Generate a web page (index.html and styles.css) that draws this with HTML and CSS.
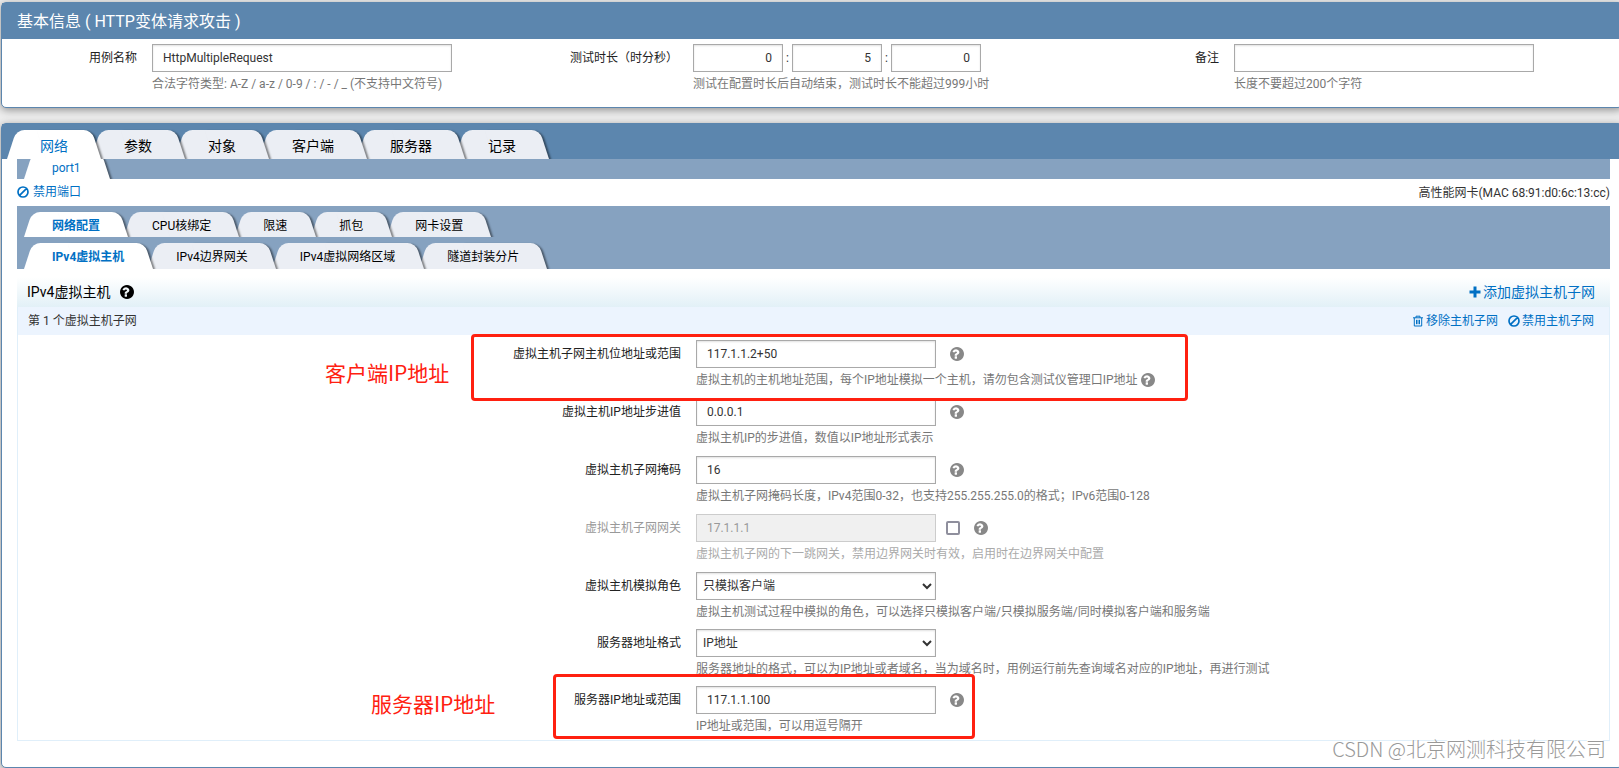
FILE: index.html
```html
<!DOCTYPE html>
<html lang="zh-CN">
<head>
<meta charset="utf-8">
<title>基本信息</title>
<link rel="stylesheet" href="styles.css">
</head>
<body>
<svg class="defs" aria-hidden="true">
  <symbol id="i-help" viewBox="128 128 1536 1536"><path d="M896 1376v-192q0-14-9-23t-23-9h-192q-14 0-23 9t-9 23v192q0 14 9 23t23 9h192q14 0 23-9t9-23zM1152 704q0-88-55.500-163t-138.500-116t-170-41q-243 0-371 213q-15 24 8 42l132 100q7 6 19 6q16 0 25-12q53-68 86-92q34-24 86-24q48 0 85.500 26t37.500 59q0 38-20 61t-68 45q-63 28-115.500 86.500t-52.500 125.500v36q0 14 9 23t23 9h192q14 0 23-9t9-23q0-19 21.500-49.500t54.500-49.500q32-18 49-28.500t46-35t44.500-48t28-60.500t12.500-81zM1664 896q0 209-103 385.500t-279.500 279.500t-385.500 103t-385.500-103t-279.500-279.500t-103-385.500t103-385.500t279.500-279.500t385.500-103t385.500 103t279.500 279.500t103 385.500z"/></symbol>
  <symbol id="i-ban" viewBox="0 0 12 12"><path d="M6 1a5 5 0 1 0 0 10a5 5 0 1 0 0-10zM2.600 9.400l6.800-6.800" fill="none" stroke="currentColor" stroke-width="1.700"/></symbol>
  <symbol id="i-plus" viewBox="0 0 12 12"><path d="M4.500 .5h3v4h4v3h-4v4h-3v-4h-4v-3h4z"/></symbol>
  <symbol id="i-trash" viewBox="0 0 12 12"><path d="M1 2.800h10M4 2.800V1.200h4v1.600M2.300 2.800v8.200h7.400V2.800M4.500 4.800v4.400M6 4.800v4.400M7.500 4.800v4.400" fill="none" stroke="currentColor"/></symbol>
</svg>
<main class="page">
  <section class="panel">
    <h1 class="panel-title">基本信息 ( HTTP变体请求攻击 )</h1>
    <div class="basics">
      <div class="basic">
        <label for="name">用例名称</label>
        <div><input class="box" id="name" value="HttpMultipleRequest"><p class="hint">合法字符类型: A-Z / a-z / 0-9 / : / - / _ (不支持中文符号)</p></div>
      </div>
      <div class="basic">
        <label for="hours">测试时长（时分秒）</label>
        <div>
          <div class="duration"><input class="box" id="hours" value="0"><span>:</span><input class="box" aria-label="分" value="5"><span>:</span><input class="box" aria-label="秒" value="0"></div>
          <p class="hint">测试在配置时长后自动结束，测试时长不能超过999小时</p>
        </div>
      </div>
      <div class="basic">
        <label for="remark">备注</label>
        <div><input class="box" id="remark"><p class="hint">长度不要超过200个字符</p></div>
      </div>
    </div>
  </section>

  <section class="panel main">
    <nav class="tabs tabs-top">
      <button class="tab active">网络</button><button class="tab">参数</button><button class="tab">对象</button><button class="tab">客户端</button><button class="tab">服务器</button><button class="tab">记录</button>
    </nav>
    <div class="content">
      <nav class="tabs tabs-port"><button class="tab active">port1</button></nav>
      <div class="port-row">
        <a class="action" href="#"><svg class="icon-sm"><use href="#i-ban"/></svg><span>禁用端口</span></a>
        <span>高性能网卡(MAC 68:91:d0:6c:13:cc)</span>
      </div>
      <nav class="tabs tabs-config">
        <button class="tab active">网络配置</button><button class="tab">CPU核绑定</button><button class="tab">限速</button><button class="tab">抓包</button><button class="tab">网卡设置</button>
      </nav>
      <nav class="tabs tabs-config tabs-sub">
        <button class="tab active">IPv4虚拟主机</button><button class="tab">IPv4边界网关</button><button class="tab">IPv4虚拟网络区域</button><button class="tab">隧道封装分片</button>
      </nav>
      <header class="group-head">
        <h2>IPv4虚拟主机 <svg class="icon"><use href="#i-help"/></svg></h2>
        <a class="action add" href="#"><svg class="icon-sm"><use href="#i-plus"/></svg><span>添加虚拟主机子网</span></a>
      </header>
      <div class="subnet">
        <div class="subnet-head">
          <span>第 1 个虚拟主机子网</span>
          <span class="actions"><a class="action" href="#"><svg class="icon-sm"><use href="#i-trash"/></svg><span>移除主机子网</span></a><a class="action" href="#"><svg class="icon-sm"><use href="#i-ban"/></svg><span>禁用主机子网</span></a></span>
        </div>
        <form class="form">
          <div class="row">
            <label for="range">虚拟主机子网主机位地址或范围</label>
            <div class="field">
              <div class="control"><input class="box" id="range" value="117.1.1.2+50"><svg class="icon"><use href="#i-help"/></svg></div>
              <p class="hint">虚拟主机的主机地址范围，每个IP地址模拟一个主机，请勿包含测试仪管理口IP地址 <svg class="icon"><use href="#i-help"/></svg></p>
              <div class="mark mark-client"></div><strong class="note note-client">客户端IP地址</strong>
            </div>
          </div>
          <div class="row">
            <label for="step">虚拟主机IP地址步进值</label>
            <div class="field">
              <div class="control"><input class="box" id="step" value="0.0.0.1"><svg class="icon"><use href="#i-help"/></svg></div>
              <p class="hint">虚拟主机IP的步进值，数值以IP地址形式表示</p>
            </div>
          </div>
          <div class="row">
            <label for="mask">虚拟主机子网掩码</label>
            <div class="field">
              <div class="control"><input class="box" id="mask" value="16"><svg class="icon"><use href="#i-help"/></svg></div>
              <p class="hint">虚拟主机子网掩码长度，IPv4范围0-32，也支持255.255.255.0的格式；IPv6范围0-128</p>
            </div>
          </div>
          <div class="row disabled">
            <label for="gateway">虚拟主机子网网关</label>
            <div class="field">
              <div class="control"><input class="box" id="gateway" value="17.1.1.1" disabled><input class="check" type="checkbox" aria-label="启用网关"><svg class="icon"><use href="#i-help"/></svg></div>
              <p class="hint">虚拟主机子网的下一跳网关，禁用边界网关时有效，启用时在边界网关中配置</p>
            </div>
          </div>
          <div class="row choice">
            <label for="role">虚拟主机模拟角色</label>
            <div class="field">
              <div class="control"><select class="box" id="role"><option>只模拟客户端</option></select></div>
              <p class="hint">虚拟主机测试过程中模拟的角色，可以选择只模拟客户端/只模拟服务端/同时模拟客户端和服务端</p>
            </div>
          </div>
          <div class="row choice">
            <label for="format">服务器地址格式</label>
            <div class="field">
              <div class="control"><select class="box" id="format"><option>IP地址</option></select></div>
              <p class="hint">服务器地址的格式，可以为IP地址或者域名，当为域名时，用例运行前先查询域名对应的IP地址，再进行测试</p>
            </div>
          </div>
          <div class="row">
            <label for="server">服务器IP地址或范围</label>
            <div class="field">
              <div class="control"><input class="box" id="server" value="117.1.1.100"><svg class="icon"><use href="#i-help"/></svg></div>
              <p class="hint">IP地址或范围，可以用逗号隔开</p>
              <div class="mark mark-server"></div><strong class="note note-server">服务器IP地址</strong>
            </div>
          </div>
        </form>
      </div>
    </div>
  </section>
  <div class="watermark">CSDN @北京网测科技有限公司</div>
</main>
</body>
</html>
```
FILE: styles.css
```css
* { box-sizing: border-box; }

body {
  margin: 0;
  background: #eee;
  color: #333;
  font: 12px/18px Roboto, "Noto Sans CJK SC", sans-serif;
}

h1, h2, p { margin: 0; font-weight: 400; }
button, input, select { font: inherit; color: inherit; }
a { color: #0070c4; text-decoration: none; }
svg { fill: currentColor; }
.defs { position: absolute; width: 0; height: 0; }
.icon { width: 14px; height: 14px; flex: none; }
.icon-sm { width: 12px; height: 12px; flex: none; }

.page { position: relative; padding: 2px 0 0 1px; overflow: hidden; }

/* Panels run past the right edge of the frame */
.panel {
  margin: 0 -4px 15px 0;
  background: #fff;
  border: 1px solid #5c86ae;
  border-radius: 5px;
  box-shadow: 0 2px 8px rgba(0, 0, 0, .4);
}
.panel.main { margin-bottom: 0; }
.panel-title {
  padding: 2px 15px 0;
  background: #5c86ae;
  color: #fff;
  font-size: 16px;
  line-height: 34px;
}

.basics { display: grid; grid-template-columns: repeat(3, 1fr); margin-right: -3px; padding: 5px 0 13px; }
.basic { display: grid; grid-template-columns: 135px 1fr; column-gap: 15px; }
.basic label, .row label { text-align: right; line-height: 28px; color: #222; }
.basic label { white-space: nowrap; }
.basic .hint { padding-top: 2px; line-height: 20px; }
.basic .box { width: 300px; }
.duration { display: flex; }
.duration .box { width: 90px; text-align: right; }
.duration span { width: 9px; text-align: center; line-height: 28px; }

.box {
  display: block;
  height: 28px;
  padding: 0 10px;
  background: #fff;
  border: 1px solid #a9a9a9;
  border-radius: 0;
  box-shadow: inset 0 1px 2px rgba(0, 0, 0, .12);
}
.hint { color: #777; }

/* Slanted tabs: each half is a skewed block behind the caption */
.tabs { display: flex; overflow: hidden; background: #86a2c0; position: relative; z-index: 0; }
.tab {
  position: relative;
  z-index: 1;
  padding: 2px 26px 0;
  border: 0;
  background: none;
  color: #000;
  white-space: nowrap;
}
.tab::before, .tab::after {
  content: "";
  position: absolute;
  z-index: -1;
  top: 0;
  bottom: 0;
  background: #ebeef4;
}
.tab::before { left: -2px; right: 50%; border-radius: 8px 0 0 0; transform: skewX(-18deg); transform-origin: bottom; }
.tab::after { right: -2px; left: 40%; border-radius: 0 8px 0 0; transform: skewX(18deg); transform-origin: bottom; box-shadow: 2px 1px 2px rgba(0, 0, 0, .45); }
.tab:nth-child(1) { z-index: 6; }
.tab:nth-child(2) { z-index: 5; }
.tab:nth-child(3) { z-index: 4; }
.tab:nth-child(4) { z-index: 3; }
.tab:nth-child(5) { z-index: 2; }
.tab.active { color: #0070c4; }
.tab.active::before, .tab.active::after { background: #fff; }

.tabs-top { padding: 6px 10px 0; background: #5c86ae; }
.tabs-top .tab { height: 29px; padding: 2px 28px 0; font-size: 14px; }
.tabs-top .tab::before { left: -5px; }
.tabs-top .tab::after { right: -5px; }
.content { padding: 0 12px 26px 15px; }
.tabs-port { height: 20px; padding: 0 9px; align-items: flex-end; }
.tabs-port .tab { height: 26px; padding: 4px 26px 0; }
.tabs-port .tab::after { right: -4px; }
.tabs-config { padding: 6px 9px 0; }
.tabs-config .tab { height: 25px; }
.tabs-sub .tab { height: 26px; }
.tabs-config .active { font-weight: 700; }

.port-row { display: flex; justify-content: space-between; align-items: center; height: 27px; }
.action { display: inline-flex; align-items: center; gap: 2px; }
.port-row .action { gap: 4px; padding-bottom: 2px; }

.group-head {
  display: flex;
  justify-content: space-between;
  align-items: center;
  height: 30px;
  margin-top: 8px;
  padding: 0 15px 0 10px;
  background: linear-gradient(#fff, #e2f0f7);
  font-size: 14px;
}
.group-head h2 { display: flex; align-items: center; gap: 10px; font-size: 14px; color: #000; }
.subnet { border: 1px solid #e0effa; border-top: 0; }
.subnet-head {
  display: flex;
  justify-content: space-between;
  align-items: center;
  height: 28px;
  padding: 0 15px 0 10px;
  background: #ecf4fe;
}
.actions { display: flex; gap: 10px; }

.form { padding: 5px 0; }
.row { display: grid; grid-template-columns: 41.6667% 1fr; column-gap: 15px; padding-bottom: 9px; }
.row.choice { padding-bottom: 8px; }
.row:last-child { padding-bottom: 0; }
.field { position: relative; }
.control { display: flex; align-items: center; gap: 14px; margin-bottom: 3px; color: #333; }
.control .box { width: 240px; }
.control select.box { padding: 0 2px; }
.control .icon, .hint .icon { color: #888; }
.hint .icon { vertical-align: -3px; }
.check {
  appearance: none;
  width: 14px;
  height: 14px;
  margin: 0 0 0 -4px;
  border: 2px solid #8f8f9d;
  border-radius: 2px;
  background: #fff;
}
.disabled label { color: #999; }
.disabled .hint { color: #aaa; }
.disabled .box { background: #f0f0f0; border-color: #ccc; color: #999; box-shadow: none; }

/* Annotations lying over the form */
.mark { position: absolute; z-index: 2; border: 3px solid #ff2010; border-radius: 4px; pointer-events: none; }
.mark-client { left: -225px; top: -6px; width: 717px; height: 67px; }
.mark-server { left: -143px; top: -12px; width: 422px; height: 65px; }
.note { position: absolute; color: #ff2010; font: 400 21px/30px "Noto Sans CJK SC", sans-serif; white-space: nowrap; }
.note-client { left: -371px; top: 17px; }
.note-server { left: -325px; top: 2px; }
.watermark {
  position: absolute;
  right: 13px;
  bottom: 4px;
  color: #999;
  font: 300 20px/30px "Noto Sans CJK SC", sans-serif;
  text-shadow: -1px -1px 0 #fff;
}
```
